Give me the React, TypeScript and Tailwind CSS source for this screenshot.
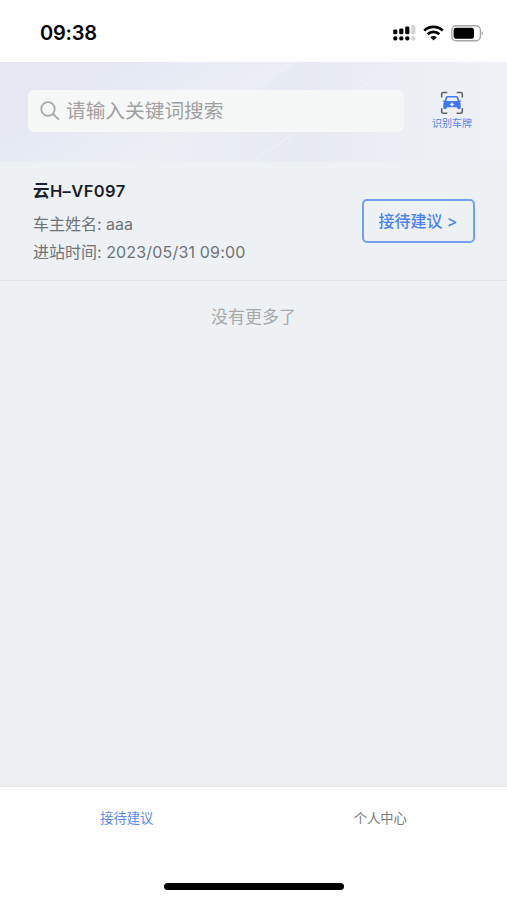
const SIGNAL_BARS = [
  { x: 0, y: 5.5, height: 4.7 },
  { x: 6, y: 4.5, height: 5.7 },
  { x: 12, y: 2.4, height: 7.8 },
  { x: 18, y: 1, height: 9.2 },
];

function SignalIcon() {
  return (
    <svg className="h-[18px] w-[23px]" viewBox="0 0 23 18">
      {SIGNAL_BARS.map((bar, i) => (
        <g key={bar.x} fill={i === 3 ? "#d4d4d4" : "#000"}>
          <rect x={bar.x + 0.2} y={bar.y} width="4.2" height={bar.height} rx="1.3" />
          <rect x={bar.x + 0.2} y="12.2" width="4.2" height="4.3" rx="1.8" />
        </g>
      ))}
    </svg>
  );
}

function WifiIcon() {
  return (
    <svg className="h-4 w-[21px]" viewBox="0 0 21 16" fill="none" stroke="#000" strokeWidth="2.7">
      <path d="M1.3 5.6C6.4.7 14.6.7 19.7 5.6" />
      <path d="M4.6 9.2c3.3-3.1 8.5-3.1 11.8 0" />
      <path d="M7.3 12.2c1.8-1.6 4.6-1.6 6.4 0l-3.2 3.3z" fill="#000" stroke="none" />
    </svg>
  );
}

function BatteryIcon() {
  return (
    <svg className="h-[17px] w-[33px]" viewBox="0 0 33 17">
      <rect x="0.8" y="0.8" width="28.6" height="15" rx="4.4" fill="none" stroke="#a6a6a6" strokeWidth="1.4" />
      <rect x="2.6" y="2.8" width="20.4" height="11" rx="2.4" fill="#000" />
      <path d="M30.6 6.2c1.8.7 1.8 3.5 0 4.2z" fill="#a6a6a6" />
    </svg>
  );
}

function StatusBar() {
  return (
    <div className="flex h-[62px] shrink-0 items-start justify-between bg-white pl-10 pr-[23px]">
      <span className="pt-[18px] font-['Inter',sans-serif] text-[20px] font-semibold leading-[30px] tracking-[-0.2px] text-black">
        09:38
      </span>
      <div className="flex items-center gap-[7px] pt-6">
        <SignalIcon />
        <WifiIcon />
        <BatteryIcon />
      </div>
    </div>
  );
}

function SearchIcon() {
  return (
    <svg className="size-5" viewBox="0 0 20 20" fill="none" stroke="#a8a8a8" strokeWidth="1.8">
      <circle cx="8" cy="8" r="6.8" />
      <path d="M13 13l6 5.7" />
    </svg>
  );
}

function PlateScanIcon() {
  return (
    <svg className="h-6 w-6" viewBox="0 0 24 24">
      <path
        d="M1.7 6.5V3.1q0-1.6 1.6-1.6h4M16.7 1.5h4q1.6 0 1.6 1.6v3.4M22.3 17.2v3.4q0 1.6-1.6 1.6h-4M7.3 22.2h-4q-1.6 0-1.6-1.6v-3.4"
        fill="none"
        stroke="#61646b"
        strokeWidth="1.6"
      />
      <path
        fillRule="evenodd"
        d="M7.6 5h8.8q1.5 0 1.9 1.4l1 3.4 1.6-.6v1.5l-1 .6q.8.9.8 2.1v3.2q0 1.7-1.8 1.7t-1.8-1.7v-.3H6.9v.3q0 1.7-1.8 1.7t-1.8-1.7v-3.2q0-1.2.8-2.1l-1-.6V9.2l1.6.6 1-3.4Q6.1 5 7.6 5zm.3 1.5q-.6 0-.7.5l-.8 3h11.2l-.8-3q-.1-.5-.7-.5zM12 10.9l-.8 1.7-1.7.8 1.7.8.8 1.7.8-1.7 1.7-.8-1.7-.8z"
        fill="#3f77f0"
      />
    </svg>
  );
}

function SearchHeader() {
  return (
    <header className="relative flex h-[100px] shrink-0 items-start overflow-hidden bg-[#e5e8f2] pl-7 pt-7">
      {/* 背景斜纹 */}
      <svg className="absolute inset-0 h-full w-full" viewBox="0 0 507 100" preserveAspectRatio="none">
        <defs>
          <linearGradient id="glow" x1="0" x2="1" y1="0" y2="0">
            <stop offset="0" stopColor="#eef1f5" stopOpacity="0" />
            <stop offset="1" stopColor="#eef1f5" stopOpacity="0.85" />
          </linearGradient>
          <linearGradient id="fade" gradientUnits="userSpaceOnUse" x1="90" x2="150" y1="0" y2="100">
            <stop offset="0.1" stopColor="#edf1f5" stopOpacity="0" />
            <stop offset="1" stopColor="#edf1f5" stopOpacity="0.85" />
          </linearGradient>
          <linearGradient id="stripe" x1="0" x2="1" y1="0" y2="0">
            <stop offset="0" stopColor="#e6e9f2" stopOpacity="0" />
            <stop offset="0.45" stopColor="#e6e9f1" stopOpacity="0.9" />
            <stop offset="1" stopColor="#eceef4" stopOpacity="0.6" />
          </linearGradient>
        </defs>
        <rect width="507" height="100" fill="url(#fade)" />
        <path d="M150 100L298 0h209v100z" fill="url(#stripe)" />
        <rect x="300" width="207" height="100" fill="url(#glow)" />
        <path d="M252 100L398 0" stroke="#f1f3f8" strokeWidth="1" />
      </svg>
      <div className="relative flex h-[42px] w-[376px] items-center gap-[6px] rounded-md bg-[#f6f7f7] pl-3">
        <SearchIcon />
        <span className="pt-px text-[19.7px] leading-none text-[#a0a0a0]">请输入关键词搜索</span>
      </div>
      <div className="relative ml-7 mt-px flex w-10 flex-col items-center">
        <PlateScanIcon />
        <span className="mt-0.5 whitespace-nowrap text-[10px] leading-3 text-[#5684f0]">识别车牌</span>
      </div>
    </header>
  );
}

function VehicleRow() {
  return (
    <div className="flex h-[119px] shrink-0 justify-between border-b border-[#e3e6e9] pl-[33px] pr-8">
      <div className="flex flex-col pt-[17px]">
        <h2 className="text-[16.5px] font-semibold leading-6 tracking-[0.4px] text-[#1c1f2b]">云H–VF097</h2>
        <p className="mt-[7px] text-[16px] leading-7 text-[#707376]">车主姓名: aaa</p>
        <p className="text-[16px] leading-7 text-[#707376]">
          进站时间: <span className="tracking-[0.18px]">2023/05/31 09:00</span>
        </p>
      </div>
      <button className="mt-[37px] h-11 w-[113px] whitespace-nowrap rounded-[5px] border-2 border-[#74a0ef] pr-px text-[16px] font-medium text-[#4c82ee]">
        接待建议 &gt;
      </button>
    </div>
  );
}

function TabBar() {
  return (
    <nav className="flex h-[114px] shrink-0 flex-col items-center border-t border-[#e6e8ea] bg-white">
      <div className="flex h-16 w-full items-center text-[13.3px]">
        <span className="flex-1 text-center text-[#5b8bf0]">接待建议</span>
        <span className="flex-1 text-center text-[#7a7a7a]">个人中心</span>
      </div>
      <div className="ml-px mt-[32px] h-[7px] w-[180px] rounded-full bg-black" />
    </nav>
  );
}

export default function App() {
  return (
    <div className="flex h-[900px] w-full flex-col overflow-hidden bg-[#edf1f4] font-['Inter','Noto_Sans_CJK_SC',sans-serif]">
      <StatusBar />
      <SearchHeader />
      <VehicleRow />
      <p className="flex-1 pt-[22px] text-center text-[17px] leading-7 text-[#a6a8aa]">没有更多了</p>
      <TabBar />
    </div>
  );
}
